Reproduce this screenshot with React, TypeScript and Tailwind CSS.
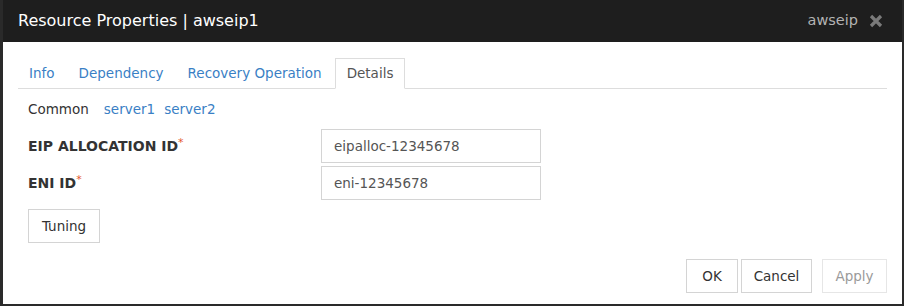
import React from 'react'

const font = { fontFamily: '"DejaVu Sans", "Noto Sans", sans-serif' }

function Field({ label, value }: { label: string; value: string }) {
  return (
    <div className="flex items-center h-[34px]">
      <div className="w-[303px] pl-[10px] text-[14px] font-bold text-[#333]">
        {label}
        <span className="text-[#e4572e] relative -top-[5px] text-[11px] font-normal">*</span>
      </div>
      <div className="w-[220px] h-[34px] border border-[#d4d4d4] flex items-center px-[12px] text-[13.5px] text-[#555]">
        {value}
      </div>
    </div>
  )
}

export default function App() {
  const tabs = ['Info', 'Dependency', 'Recovery Operation']

  return (
    <div
      className="w-[904px] h-[306px] bg-white border-l-[3px] border-r-2 border-b-2 border-[#2a2a2a] flex flex-col"
      style={font}
    >
      {/* title bar */}
      <div className="h-[42px] bg-[#1e1e1e] flex items-center justify-between pl-[15px] pr-[19px] shrink-0">
        <span className="text-white text-[16px]">Resource Properties | awseip1</span>
        <div className="flex items-center gap-[11px]">
          <span className="text-[#b3b3b3] text-[14.5px]">awseip</span>
          <svg width="14" height="14" viewBox="0 0 14 14">
            <path d="M2 2 L12 12 M12 2 L2 12" stroke="#7a7a7a" strokeWidth="3.2" />
          </svg>
        </div>
      </div>

      <div className="flex-1 flex flex-col px-[15px] pt-[16px]">
        {/* tabs */}
        <div className="flex border-b border-[#ddd] h-[31px]">
          {tabs.map((t) => (
            <div key={t} className="px-[11px] mr-[2px] h-[31px] flex items-center text-[13.5px] text-[#3a7fc5]">
              {t}
            </div>
          ))}
          <div className="px-[11px] h-[31px] -mb-px flex items-center text-[13.5px] text-[#555] bg-white border border-[#ddd] border-b-white">
            Details
          </div>
        </div>

        {/* server selector */}
        <div className="flex items-center h-[20px] mt-[10px] pl-[10px] text-[13.5px]">
          <span className="text-[#333] mr-[15px]">Common</span>
          <span className="text-[#3a7fc5] mr-[9px]">server1</span>
          <span className="text-[#3a7fc5]">server2</span>
        </div>

        <div className="mt-[10px] flex flex-col gap-[3px]">
          <Field label="EIP ALLOCATION ID" value="eipalloc-12345678" />
          <Field label="ENI ID" value="eni-12345678" />
        </div>

        <div className="mt-[9px] pl-[10px]">
          <button className="w-[72px] h-[34px] border border-[#d4d4d4] bg-white text-[13.5px] text-[#333]">
            Tuning
          </button>
        </div>

        <div className="mt-[16px] flex justify-end">
          <button className="w-[52px] h-[34px] border border-[#d4d4d4] bg-white text-[13.5px] text-[#333]">OK</button>
          <button className="w-[71px] h-[34px] ml-[3px] border border-[#d4d4d4] bg-white text-[13.5px] text-[#333]">Cancel</button>
          <button className="w-[65px] h-[34px] ml-[10px] border border-[#e6e6e6] bg-white text-[13.5px] text-[#9a9a9a]">Apply</button>
        </div>
      </div>
    </div>
  )
}
